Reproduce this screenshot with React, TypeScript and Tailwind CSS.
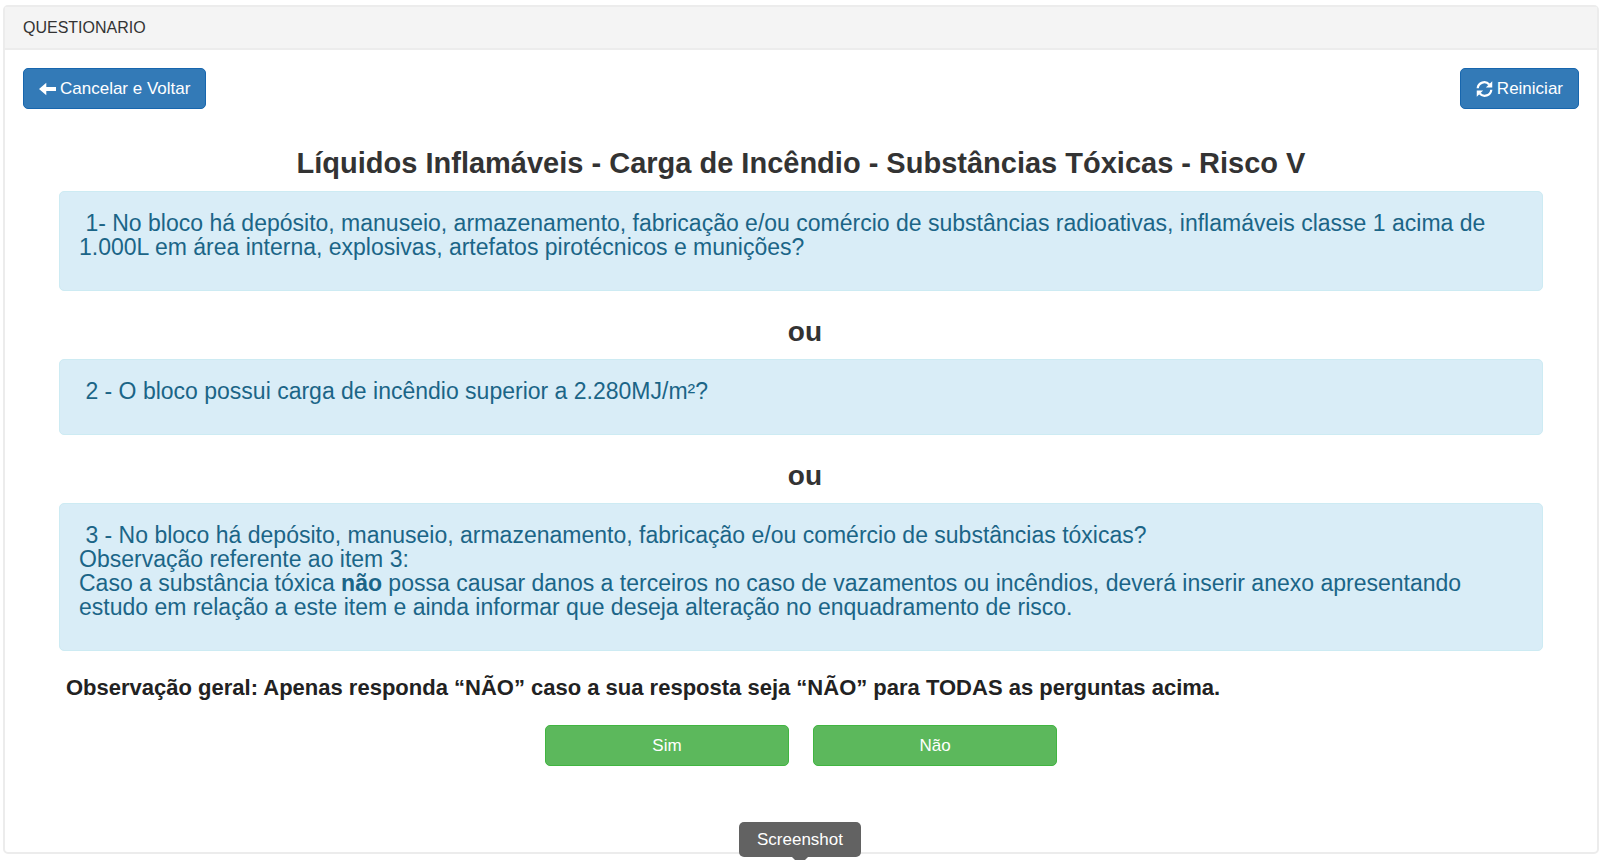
import { ReactNode } from "react";

const ArrowLeftIcon = () => {
  return (
    <svg viewBox="0 0 17 14" className="h-[14px] w-[17px]" fill="currentColor" aria-hidden="true">
      <path d="M0 7 7.3 0.8V5.1H17V8.9H7.3V13.2Z" />
    </svg>
  );
};

const RefreshIcon = () => {
  return (
    <svg viewBox="0 0 18 18" className="h-[18px] w-[17px]" aria-hidden="true">
      <path
        d="M1.8 8.2A7 7 0 0 1 14 4.2M16.2 9.8A7 7 0 0 1 4 13.8"
        fill="none"
        stroke="currentColor"
        strokeWidth="2.4"
      />
      <path d="M17.2 0.8V7.4H10.4ZM0.8 17.2V10.6H7.6Z" fill="currentColor" />
    </svg>
  );
};

const QuestionBox = ({ children }: { children: ReactNode }) => {
  return (
    <div className="rounded-[5px] border border-[#cdebf3] bg-[#d9edf7] px-[19px] pt-[19px] pb-[31px] text-[23px] leading-6 text-[#1b6587]">
      {children}
    </div>
  );
};

const Separator = () => {
  return (
    <p className="pt-[26px] pb-3 text-center text-[28px] leading-[30px] font-bold text-[#333]">
      &nbsp;ou
    </p>
  );
};

const primaryButton =
  "flex h-[41px] items-center gap-1 rounded-[5px] border border-[#1766ae] bg-[#337ab7] px-[15px] text-[17px] text-white hover:bg-[#286090]";

const answerButton =
  "h-[41px] w-[244px] rounded-[5px] border border-[#41b541] bg-[#5cb85c] text-[17px] text-white hover:bg-[#449d44]";

const App = () => {
  return (
    <div className="relative overflow-hidden bg-white pt-[5px] pr-px pb-[6px] pl-[3px] font-['Liberation_Sans',Arial,sans-serif]">
      <section className="rounded-[5px] border-2 border-[#ececec]">
        <header className="border-b-2 border-[#ececec] bg-[#f4f4f4] px-[18px] py-[10px]">
          <h1 className="text-base leading-[21px] text-[#333]">QUESTIONARIO</h1>
        </header>

        <div className="px-[18px] pt-[18px] pb-[86px]">
          <div className="flex justify-between">
            <button type="button" className={primaryButton}>
              <ArrowLeftIcon />
              Cancelar e Voltar
            </button>
            <button type="button" className={primaryButton}>
              <RefreshIcon />
              Reiniciar
            </button>
          </div>

          <main className="px-9 pt-[38px]">
            <h2 className="pb-3 text-center text-[29px] leading-8 font-bold text-[#333]">
              Líquidos Inflamáveis - Carga de Incêndio - Substâncias Tóxicas - Risco V
            </h2>

            <QuestionBox>
              &nbsp;1- No bloco há depósito, manuseio, armazenamento, fabricação e/ou comércio de
              substâncias radioativas, inflamáveis classe 1 acima de 1.000L em área interna,
              explosivas, artefatos pirotécnicos e munições?
            </QuestionBox>
            <Separator />
            <QuestionBox>
              &nbsp;2 - O bloco possui carga de incêndio superior a 2.280MJ/m²?
            </QuestionBox>
            <Separator />
            <QuestionBox>
              &nbsp;3 - No bloco há depósito, manuseio, armazenamento, fabricação e/ou comércio de
              substâncias tóxicas?
              <br />
              Observação referente ao item 3:
              <br />
              Caso a substância tóxica <strong>não</strong> possa causar danos a terceiros no caso
              de vazamentos ou incêndios, deverá inserir anexo apresentando estudo em relação a
              este item e ainda informar que deseja alteração no enquadramento de risco.
            </QuestionBox>

            <p className="px-[7px] pt-[25px] text-[22px] leading-6 font-bold text-[#222]">
              Observação geral: Apenas responda “NÃO” caso a sua resposta seja “NÃO” para TODAS as
              perguntas acima.
            </p>

            <div className="flex justify-center gap-6 pt-[25px]">
              <button type="button" className={answerButton}>
                Sim
              </button>
              <button type="button" className={answerButton}>
                Não
              </button>
            </div>
          </main>
        </div>
      </section>

      <div
        role="tooltip"
        className="absolute bottom-[3px] left-1/2 -translate-x-1/2 rounded-[5px] bg-[#626262] px-[18px] text-[17px] leading-[35px] text-white">
        Screenshot
        <span className="absolute top-full left-1/2 h-0 w-0 -translate-x-1/2 border-x-8 border-t-8 border-x-transparent border-t-[#626262]" />
      </div>
    </div>
  );
};

export default App;
